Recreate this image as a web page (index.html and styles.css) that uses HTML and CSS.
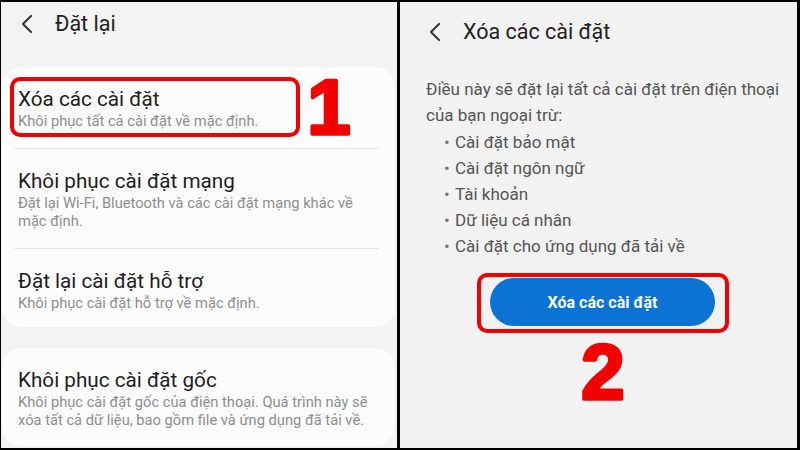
FILE: index.html
```html
<!DOCTYPE html>
<html lang="vi">
<head>
<meta charset="utf-8">
<title>Đặt lại</title>
<link rel="stylesheet" href="styles.css">
</head>
<body>
<div class="frame">
  <section class="panel panel-left">
    <header class="bar">
      <svg class="back" width="12" height="18" viewBox="0 0 12 18"><polyline points="10,1 2,9 10,17" fill="none" stroke="#333" stroke-width="2" stroke-linecap="round" stroke-linejoin="round"/></svg>
      <h1 class="bar-title">Đặt lại</h1>
    </header>

    <div class="card">
      <div class="item">
        <div class="item-title">Xóa các cài đặt</div>
        <div class="item-sub">Khôi phục tất cả cài đặt về mặc định.</div>
      </div>
      <div class="sep"></div>
      <div class="item">
        <div class="item-title">Khôi phục cài đặt mạng</div>
        <div class="item-sub">Đặt lại Wi-Fi, Bluetooth và các cài đặt mạng khác về mặc định.</div>
      </div>
      <div class="sep"></div>
      <div class="item">
        <div class="item-title">Đặt lại cài đặt hỗ trợ</div>
        <div class="item-sub">Khôi phục cài đặt hỗ trợ về mặc định.</div>
      </div>
    </div>

    <div class="card card-second">
      <div class="item">
        <div class="item-title">Khôi phục cài đặt gốc</div>
        <div class="item-sub">Khôi phục cài đặt gốc của điện thoại. Quá trình này sẽ xóa tất cả dữ liệu, bao gồm file và ứng dụng đã tải về.</div>
      </div>
    </div>

    <div class="mark-box"></div>
    <svg class="step step-one" width="48" height="96" viewBox="0 0 48 96"><text x="24" y="76" text-anchor="middle">1</text></svg>
  </section>

  <section class="panel panel-right">
    <header class="bar bar-right">
      <svg class="back" width="12" height="18" viewBox="0 0 12 18"><polyline points="10,1 2,9 10,17" fill="none" stroke="#333" stroke-width="2" stroke-linecap="round" stroke-linejoin="round"/></svg>
      <h1 class="bar-title">Xóa các cài đặt</h1>
    </header>

    <div class="body">
      <p class="lead">Điều này sẽ đặt lại tất cả cài đặt trên điện thoại của bạn ngoại trừ:</p>
      <ul class="list">
        <li><span class="dot">•</span>Cài đặt bảo mật</li>
        <li><span class="dot">•</span>Cài đặt ngôn ngữ</li>
        <li><span class="dot">•</span>Tài khoản</li>
        <li><span class="dot">•</span>Dữ liệu cá nhân</li>
        <li><span class="dot">•</span>Cài đặt cho ứng dụng đã tải về</li>
      </ul>
    </div>

    <div class="actions">
      <div class="mark-wrap">
        <button class="primary">Xóa các cài đặt</button>
      </div>
      <svg class="step step-two" width="48" height="96" viewBox="0 0 48 96"><text x="24" y="76" text-anchor="middle">2</text></svg>
    </div>
  </section>
</div>
</body>
</html>
```

FILE: styles.css
```css
* { box-sizing: border-box; }

html, body {
  margin: 0;
  padding: 0;
  background: #000;
}

body {
  font-family: Roboto, "Noto Sans", "Liberation Sans", sans-serif;
  color: #202020;
}

.frame {
  display: flex;
  width: 800px;
  height: 450px;
  padding: 2px 3px 2px 1px;
  gap: 3px;
}

.panel {
  height: 446px;
  overflow: hidden;
  position: relative;
}

.panel-left {
  width: 396px;
  background: #f3f3f3;
}

.panel-right {
  width: 397px;
  background: #f2f2f2;
}

/* header bar */
.bar {
  height: 44px;
  display: flex;
  align-items: center;
  padding-left: 20px;
  gap: 22px;
  margin-bottom: 21px;
}

.bar-right {
  height: 60px;
  padding-left: 29px;
  margin-bottom: 14px;
}

.back { display: block; flex: none; }

.bar-title {
  margin: 0;
  font-size: 21.5px;
  line-height: 24px;
  font-weight: 400;
  color: #222;
}

/* cards */
.card {
  margin: 0 2px 0 1px;
  background: #fcfcfc;
  border-radius: 20px;
}

.card-second {
  margin-top: 21px;
}

.item {
  padding: 20px 16px 18px 16px;
}

.card .item:last-child {
  padding-bottom: 15px;
}

.card-second .item:last-child {
  padding-bottom: 17px;
}

.item-title {
  font-size: 20.7px;
  line-height: 24px;
  color: #1e1e1e;
}

.item-sub {
  margin-top: 1px;
  font-size: 14.7px;
  line-height: 18px;
  color: #8e8e8e;
}

.sep {
  height: 1px;
  margin: 0 16px 0 12px;
  background: #e6e6e6;
}

/* annotation overlays */
.mark-box {
  position: absolute;
  left: 9px;
  top: 75px;
  width: 290px;
  height: 60px;
  border: 4px solid #f50000;
  border-radius: 10px;
}

.step {
  overflow: visible;
}

.step text {
  font-family: "Liberation Sans", Arial, sans-serif;
  font-weight: 700;
  font-size: 78px;
  fill: #f50000;
  stroke: #f50000;
  stroke-width: 3.5;
  stroke-linejoin: round;
}

.step-one {
  position: absolute;
  left: 304px;
  top: 56px;
}

/* right body */
.body {
  padding-left: 26px;
  color: #555;
  font-size: 17px;
  line-height: 26px;
}

.lead {
  margin: 0 0 1px 0;
}

.list {
  list-style: none;
  margin: 0;
  padding: 0 0 0 18px;
}

.dot {
  display: inline-block;
  width: 11px;
  color: #777;
}

.actions {
  display: flex;
  flex-direction: column;
  align-items: center;
  padding-left: 9px;
  margin-top: 14px;
}

.mark-wrap {
  width: 252px;
  height: 60px;
  border: 4px solid #f50000;
  border-radius: 10px;
  padding: 1px 10px 3px 9px;
}

.primary {
  display: block;
  width: 100%;
  height: 48px;
  border: 0;
  border-radius: 24px;
  background: #0a73d4;
  color: #fff;
  font-family: Roboto, "Noto Sans", sans-serif;
  font-size: 16px;
  font-weight: 700;
}

.step-two {
  display: block;
  margin-top: -10px;
}
```
